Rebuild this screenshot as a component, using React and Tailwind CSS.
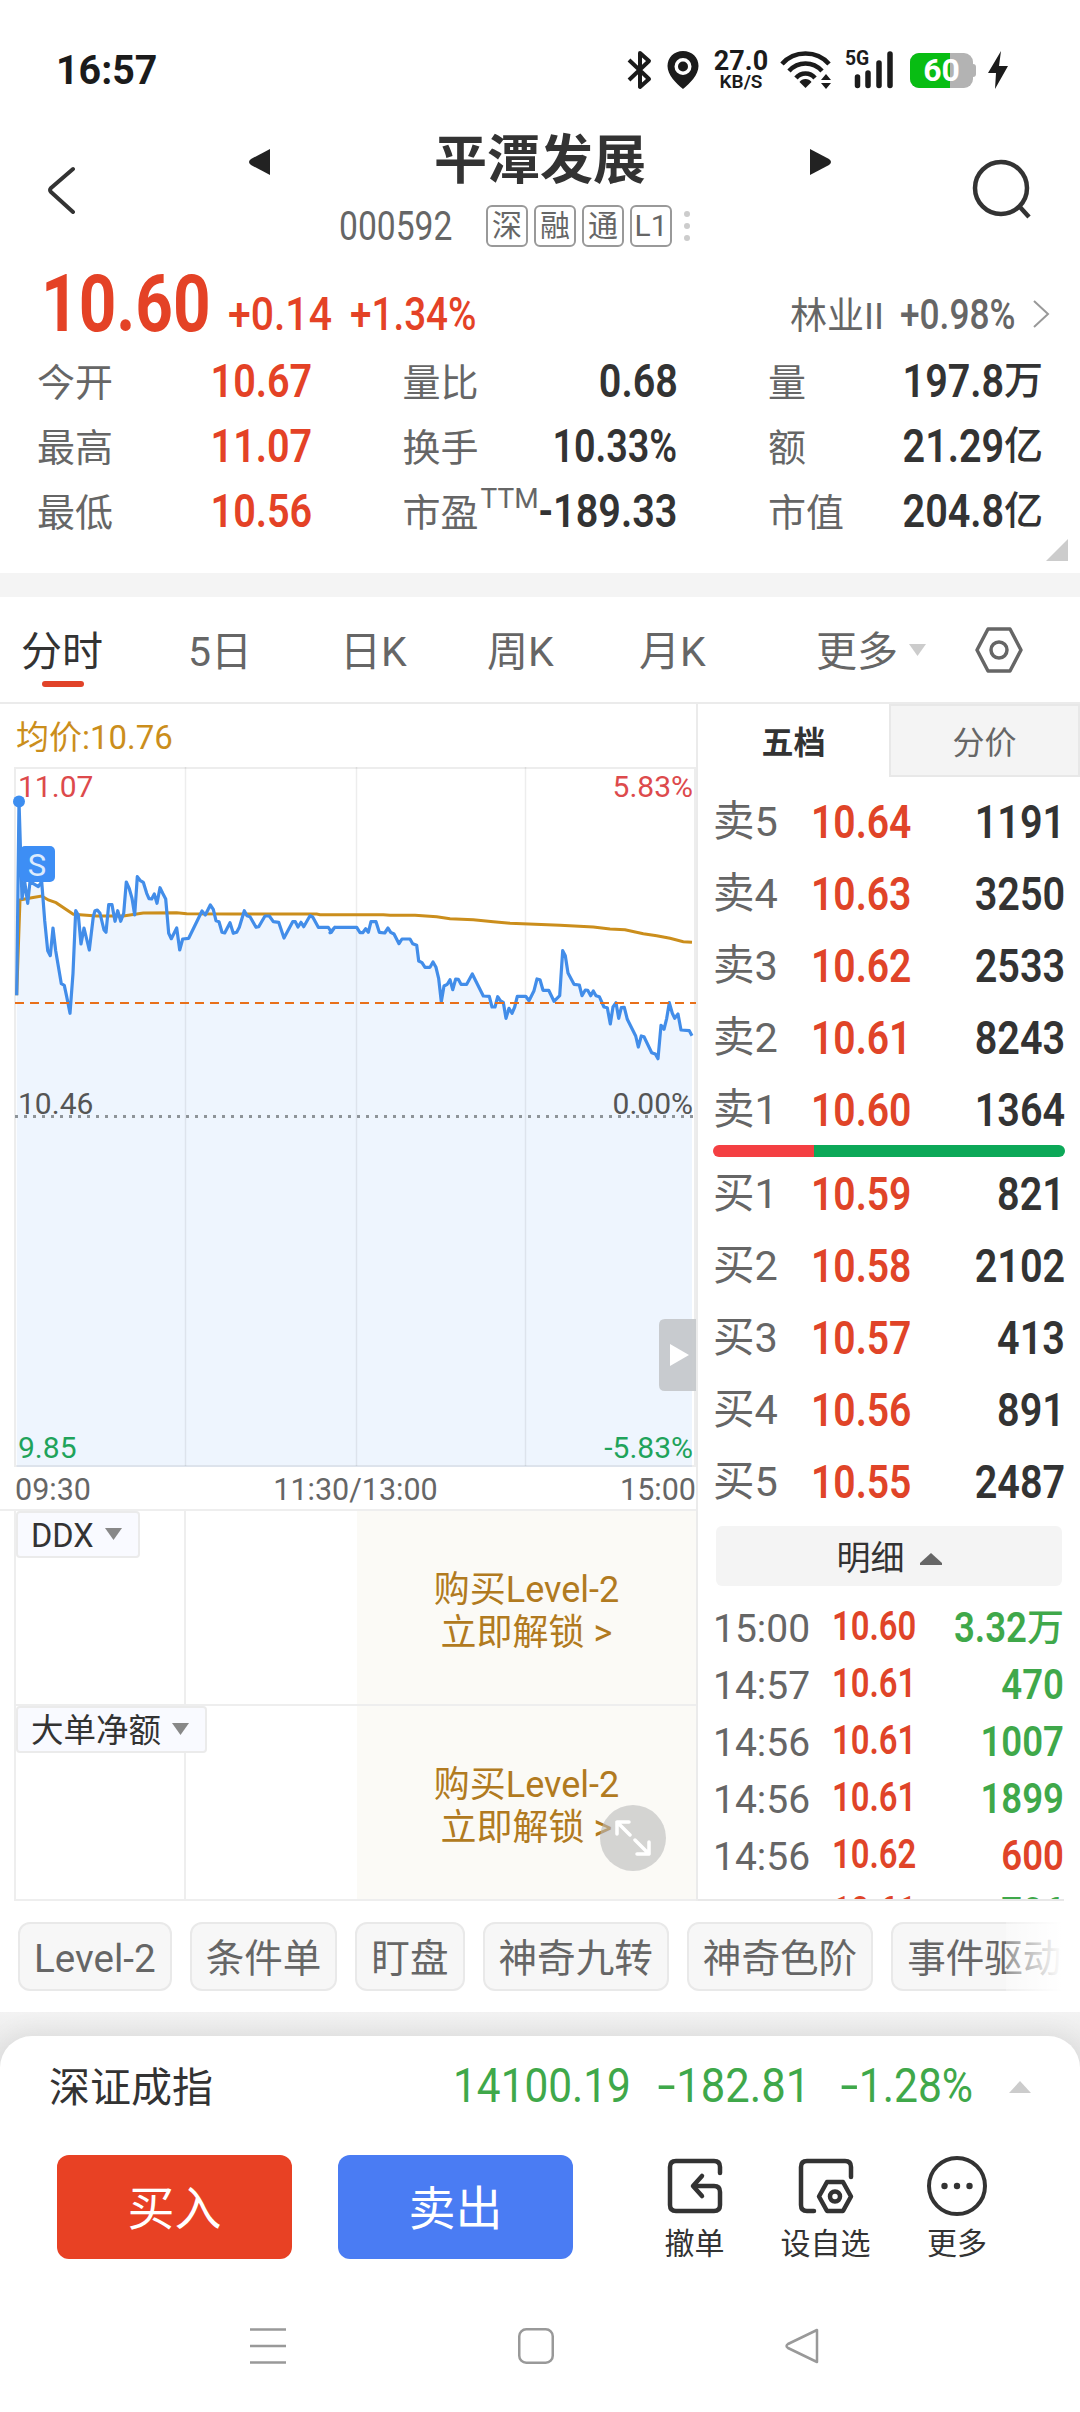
const STATS = [
  ['今开', '10.67', '量比', '0.68', '量', '197.8万'],
  ['最高', '11.07', '换手', '10.33%', '额', '21.29亿'],
  ['最低', '10.56', '市盈', '-189.33', '市值', '204.8亿'],
];

const ASKS = [
  ['卖5', '10.64', '1191'],
  ['卖4', '10.63', '3250'],
  ['卖3', '10.62', '2533'],
  ['卖2', '10.61', '8243'],
  ['卖1', '10.60', '1364'],
];

const BIDS = [
  ['买1', '10.59', '821'],
  ['买2', '10.58', '2102'],
  ['买3', '10.57', '413'],
  ['买4', '10.56', '891'],
  ['买5', '10.55', '2487'],
];

const TRADES = [
  { time: '15:00', price: '10.60', vol: '3.32万', up: false },
  { time: '14:57', price: '10.61', vol: '470', up: false },
  { time: '14:56', price: '10.61', vol: '1007', up: false },
  { time: '14:56', price: '10.61', vol: '1899', up: false },
  { time: '14:56', price: '10.62', vol: '600', up: true },
  { time: '', price: '10.61', vol: '706', up: false },
];

const CHIPS = ['Level-2', '条件单', '盯盘', '神奇九转', '神奇色阶', '事件驱动'];

// Chart units are a third of a pixel
const PRICE_AM = [
  [50, 886], [57, 304], [66, 596], [74, 545], [83, 610], [90, 545], [115, 560], [125, 545], [134, 662], [143, 752],
  [151, 767], [159, 684], [167, 752], [184, 851], [193, 856], [200, 890], [210, 940], [219, 820], [227, 632], [235, 645],
  [243, 732], [252, 684], [268, 750], [280, 650], [285, 632], [292, 630], [300, 640], [312, 690], [318, 697], [326, 614],
  [336, 614], [345, 664], [353, 632], [362, 664], [371, 640], [379, 546], [388, 566], [396, 595], [404, 645], [412, 530],
  [420, 541], [430, 547], [440, 580], [447, 596], [455, 597], [463, 582], [471, 610], [480, 563], [488, 580], [497, 597],
  [506, 700], [514, 716], [530, 684], [539, 750], [548, 717], [566, 715], [606, 633], [616, 645], [631, 615], [640, 628],
  [648, 662], [657, 665], [666, 697], [674, 699], [690, 668], [700, 700], [710, 697], [718, 682], [733, 632], [741, 647],
  [750, 650], [768, 682], [776, 680], [795, 648], [808, 648], [820, 665], [836, 667], [852, 714], [878, 665], [886, 665],
  [894, 681], [903, 667], [911, 680], [930, 647], [938, 651], [955, 682], [985, 682], [994, 697], [1004, 682],
];
const PRICE_PM = [
  [0, 578], [14, 562], [80, 562], [90, 578], [98, 578], [107, 566], [115, 577], [123, 545], [138, 545], [148, 577],
  [164, 579], [174, 564], [182, 577], [192, 582], [207, 611], [216, 597], [240, 597], [248, 611], [260, 616], [266, 663],
  [276, 668], [285, 682], [300, 682], [309, 666], [318, 682], [326, 716], [334, 785], [342, 738], [352, 733], [360, 719],
  [368, 749], [377, 717], [385, 718], [393, 733], [410, 733], [427, 702], [460, 768], [478, 769], [486, 801], [495, 801],
  [503, 770], [511, 782], [520, 787], [528, 835], [537, 805], [546, 820], [554, 801], [562, 769], [587, 769], [597, 782],
  [612, 752], [621, 717], [630, 719], [639, 751], [656, 751], [672, 784], [689, 767], [698, 632], [706, 647], [714, 699],
  [732, 733], [748, 735], [756, 767], [766, 750], [773, 751], [782, 767], [790, 753], [798, 767], [808, 770], [822, 801],
  [832, 803], [841, 852], [849, 801], [858, 788], [866, 835], [874, 803], [883, 802], [892, 838], [917, 888], [925, 921],
  [934, 888], [942, 890], [965, 938], [976, 942], [984, 956], [993, 856], [1002, 868], [1010, 835], [1018, 788], [1027, 820],
  [1034, 835], [1044, 822], [1053, 870], [1078, 872], [1086, 887],
];
const AVG_AM = [
  [50, 886], [60, 600], [75, 597], [95, 593], [125, 588], [145, 600], [168, 608], [220, 643], [290, 648], [370, 648],
  [430, 639], [530, 638], [560, 641], [700, 642], [950, 642], [960, 644],
];
const AVG_PM = [
  [0, 524], [160, 524], [180, 526], [255, 526], [320, 530], [360, 536], [430, 539], [490, 545], [540, 550], [690, 556],
  [790, 561], [840, 567], [885, 569], [940, 581], [980, 587], [1020, 595], [1060, 605], [1086, 607],
];

const toPoints = (am, pm) =>
  [...am.map(([x, y]) => [x, y - 201]), ...pm.map(([x, y]) => [x + 990, y - 81])]
    .map(([x, y]) => `${(x / 3).toFixed(1)},${(y / 3).toFixed(1)}`)
    .join(' ');

const pricePoints = toPoints(PRICE_AM, PRICE_PM);
const avgPoints = toPoints(AVG_AM, AVG_PM);

function StatusBar() {
  return (
    <div className="h-[120px] pl-[56px] pr-[71px] pt-[20px] flex items-center justify-between text-[#1b1b1b]">
      <span className="text-[41px] font-bold leading-none origin-left scale-x-[.96]">16:57</span>
      <div className="flex items-center">
        <svg width="26" height="40" viewBox="0 0 26 40" fill="none" stroke="currentColor" strokeWidth="4" strokeLinejoin="round">
          <path d="M2 10L22 29L13 37V3L22 11L2 30" />
        </svg>
        <svg className="ml-[14px]" width="32" height="38" viewBox="0 0 32 38">
          <path fill="currentColor" fillRule="evenodd" d="M16 0C7 0 .5 6.500 .5 15C.5 24 9 32 16 38C23 32 31.500 24 31.500 15C31.500 6.500 25 0 16 0ZM16 7A8.500 8.500 0 1 1 16 24A8.500 8.500 0 1 1 16 7Z" />
          <circle cx="16" cy="15.500" r="5" fill="currentColor" />
        </svg>
        <div className="ml-[14px] w-[56px] flex flex-col items-center">
          <span className="text-[27px] leading-[22px] font-bold">27.0</span>
          <span className="text-[19px] leading-[19px] font-semibold">KB/S</span>
        </div>
        <svg className="ml-[11px]" width="54" height="38" viewBox="0 0 54 38" fill="none" stroke="currentColor" strokeWidth="4.500">
          <path d="M2 13C14 -1 37 -1 49 13" />
          <path d="M9 20C18 10 33 10 42 20" />
          <path d="M16 27C21 21 30 21 35 27" />
          <path d="M25.500 37L19.500 31C22 27 29 27 31.500 31Z" fill="currentColor" stroke="none" />
          <path d="M41 29L46 23L51 29ZM41 32L46 38L51 32Z" fill="currentColor" stroke="none" />
        </svg>
        <div className="relative ml-[11px] w-[50px] h-[38px]">
          <span className="absolute left-0 -top-px text-[21px] leading-[17px] font-bold origin-left scale-x-[.92]">5G</span>
          <svg width="50" height="38" viewBox="0 0 50 38" stroke="currentColor" strokeWidth="5.500" strokeLinecap="round">
            <path d="M12.500 26V34.500M23 22V34.500M34 12V34.500M45 3V34.500" />
          </svg>
        </div>
        <div className="relative ml-[15px] w-[63px] h-[35px] rounded-[9px] overflow-hidden bg-[#b3b3b3] flex items-center justify-center">
          <div className="absolute left-0 inset-y-0 w-[40px] bg-[#08bd13]" />
          <span className="relative text-[32px] leading-none font-bold text-white">60</span>
        </div>
        <div className="w-[3px] h-[13px] rounded-r bg-[#b3b3b3]" />
        <svg className="ml-[11px]" width="22" height="38" viewBox="0 0 22 38" fill="currentColor">
          <path d="M14 0L1 22H9L8 38L21 15H12Z" />
        </svg>
      </div>
    </div>
  );
}

function Header() {
  return (
    <div className="h-[140px] flex">
      <svg className="mt-[46px] ml-[47px]" width="30" height="48" viewBox="0 0 30 48" fill="none" stroke="#333" strokeWidth="4" strokeLinecap="round" strokeLinejoin="round">
        <path d="M26 3L4 22Q2 24 4 26L26 46" />
      </svg>
      <div className="w-[584px] ml-[171px] flex flex-col">
        <div className="h-[78px] flex items-center justify-between">
          <svg width="23" height="28" viewBox="0 0 23 28" className="mt-[6px]"><path fill="#222" d="M22 1V27L3 17Q-1 14 3 11Z" /></svg>
          <h1 className="pt-[4px] text-[53px] leading-none font-bold text-[#333]">平潭发展</h1>
          <svg width="23" height="28" viewBox="0 0 23 28" className="mt-[6px]"><path fill="#222" d="M1 1V27L20 17Q24 14 20 11Z" /></svg>
        </div>
        <div className="h-[56px] pl-[91px] flex items-center text-[#666]">
          <span className="w-[147px] pt-px text-[40px] leading-none"><span className="inline-block origin-left scale-x-[.84]">000592</span></span>
          <div className="flex gap-[6px]">
            {['深', '融', '通', 'L1'].map((tag) => (
              <span key={tag} className="w-[42px] h-[42px] rounded-[6px] border-2 border-[#999] flex items-center justify-center text-[30px] leading-none">{tag}</span>
            ))}
          </div>
          <div className="ml-[12px] flex flex-col gap-[6px]">
            {[0, 1, 2].map((i) => <span key={i} className="w-[6px] h-[6px] rounded-full bg-[#ccc]" />)}
          </div>
        </div>
      </div>
      <svg className="mt-[39px] ml-auto mr-[46px]" width="62" height="62" viewBox="0 0 62 62" fill="none" stroke="#333" strokeWidth="4.500">
        <circle cx="29" cy="29" r="26" />
        <path d="M47 47L57 58" />
      </svg>
    </div>
  );
}

function Quote() {
  return (
    <div className="relative h-[313px]">
      <div className="h-[88px] pl-[41px] pr-[29px] flex items-center text-[#e44226]">
        <span className="w-[187px] text-[80px] leading-none font-bold"><span className="inline-block origin-left scale-x-[.82]">10.60</span></span>
        <div className="mt-[20px] flex flex-1 items-center text-[46px] leading-none font-medium">
          <span className="w-[122px]"><span className="inline-block origin-left scale-x-[.89]">+0.14</span></span>
          <span><span className="inline-block origin-left scale-x-[.84]">+1.34%</span></span>
        </div>
        <div className="mt-[20px] flex items-center text-[#666] leading-none">
          <span className="mt-[4px] text-[37px] w-[110px]">林业II</span>
          <span className="text-[43px] w-[131px] font-medium"><span className="inline-block origin-left scale-x-[.82]">+0.98%</span></span>
          <svg width="20" height="30" viewBox="0 0 20 30" fill="none" stroke="#999" strokeWidth="2"><path d="M3 2L17 15L3 28" /></svg>
        </div>
      </div>
      <div className="pl-[37px] pr-[37px]">
        {STATS.map((row, r) => (
          <div key={row[0]} className="h-[65px] flex items-center justify-between text-[38px] leading-none text-[#666]">
            {[0, 2, 4].map((c) => (
              <div key={c} className="w-[275px] flex items-center justify-between">
                <span className="pt-[4px] whitespace-nowrap">
                  {row[c]}
                  {r === 2 && c === 2 && <span className="relative -top-[18px] left-[2px] text-[28px] leading-none">TTM</span>}
                </span>
                <span className={`${c === 0 ? 'text-[#e44226]' : 'text-[#333]'} w-[100px] flex justify-end text-[46px] font-semibold`}>
                  <span className={`origin-right whitespace-nowrap ${row[c + 1].endsWith('%') ? 'scale-x-[.82]' : 'scale-x-[.86]'}`}>
                    {row[c + 1].replace(/[万亿]/, '')}
                  </span>
                  {c === 4 && <span className="text-[39px] leading-[46px] font-medium">{row[5].slice(-1)}</span>}
                </span>
              </div>
            ))}
          </div>
        ))}
      </div>
      <svg className="absolute right-[12px] bottom-[12px]" width="22" height="22" viewBox="0 0 22 22"><path d="M22 0V22H0Z" fill="#ccc" /></svg>
    </div>
  );
}

function PeriodTabs() {
  return (
    <div className="h-[107px] pt-[5px] border-b-2 border-[#ebebeb] flex items-center text-[41px] leading-none text-[#666]">
      <div className="relative ml-[21px] w-[167px] text-[#333]">
        分时
        <div className="absolute left-[21px] top-[49px] w-[42px] h-[6px] rounded-full bg-[#e14329]" />
      </div>
      <span className="w-[152px]">5日</span>
      <span className="w-[147px]">日K</span>
      <span className="w-[152px]">周K</span>
      <span className="w-[177px]">月K</span>
      <span>更多</span>
      <svg className="ml-[11px] mb-[5px]" width="17" height="12" viewBox="0 0 17 12"><path d="M0 0H17L8.500 12Z" fill="#ccc" /></svg>
      <svg className="ml-[48px] mb-[5px]" width="50" height="48" viewBox="0 0 50 48" fill="none" stroke="#666" strokeWidth="3.500" strokeLinejoin="round">
        <path d="M14 3H36L47 24L36 45H14L3 24Z" />
        <circle cx="25" cy="24" r="8" />
      </svg>
    </div>
  );
}

function MinuteChart() {
  return (
    <svg width="696" height="700" viewBox="0 0 696 700" className="block">
      <polygon points={`16.700,700 ${pricePoints} 692,700`} fill="#eef5fe" />
      <g stroke="#000" strokeOpacity=".07" strokeWidth="1.500">
        <path d="M185.500 0V699M356.500 0V699M525.500 0V699" />
        <path d="M15 1H695V699H15Z" fill="none" strokeWidth="2" />
      </g>
      <g fontSize="30">
        <text x="18" y="30" fill="#dd4a4c">11.07</text>
        <text x="693" y="30" textAnchor="end" fill="#dd4a4c">5.83%</text>
        <text x="18" y="347" fill="#555">10.46</text>
        <text x="693" y="347" textAnchor="end" fill="#555">0.00%</text>
        <text x="18" y="691" fill="#1fa35b">9.85</text>
        <text x="693" y="691" textAnchor="end" fill="#1fa35b">-5.83%</text>
      </g>
      <path d="M15 349.500H694" stroke="#8e9499" strokeWidth="3" strokeDasharray="3 6" />
      <polyline points={avgPoints} fill="none" stroke="#cb8e1c" strokeWidth="3" />
      <polyline points={pricePoints} fill="none" stroke="#428de9" strokeWidth="3.200" strokeLinejoin="round" />
      <path d="M15 236H696" stroke="#e8701a" strokeWidth="2" strokeDasharray="9 6" />
      <circle cx="19" cy="34.500" r="6" fill="#3d8ef0" />
      <rect x="20" y="79" width="35" height="36" rx="5" fill="#3d8ef5" />
      <text x="37" y="109" textAnchor="middle" fontSize="31" fill="#dcebfd">S</text>
      <path d="M696 552H665Q659 552 659 558V618Q659 624 665 624H696Z" fill="#c3c6ca" fillOpacity=".9" />
      <path d="M670 577L689 588L670 599Z" fill="#fff" />
    </svg>
  );
}

function LockedPanel({ name, width }) {
  return (
    <div className="h-[195px] ml-[14px] border-l-2 border-b-2 border-[#eee] flex">
      <div className="w-[170px] border-r-2 border-[#eee]">
        <div className={`${width} relative h-[47px] border-2 border-[#ebebeb] rounded-[4px] bg-[#f9faff] pl-[13px] pt-[3px] flex items-center text-[32.5px] leading-none text-[#333] whitespace-nowrap`}>
          {name}
          <svg className="ml-[11px] mb-[4px]" width="17" height="12" viewBox="0 0 17 12"><path d="M0 0H17L8.500 12Z" fill="#888" /></svg>
        </div>
      </div>
      <div className="w-[171px]" />
      <div className="flex-1 bg-[#fbfaf6] flex flex-col items-center justify-center pt-[8px] text-[36px] leading-[43px] text-[#b17a20]">
        <span>购买Level-2</span>
        <span>立即解锁 &gt;</span>
      </div>
    </div>
  );
}

function BookRow({ row }) {
  return (
    <div className="h-[72px] pl-[15px] pr-[15px] pt-px flex items-center text-[46px] leading-none font-semibold">
      <span className="w-[98px] pt-px text-[41.5px] font-normal text-[#666]">{row[0]}</span>
      <span className="text-[#e04428] origin-left scale-x-[.85]">{row[1]}</span>
      <span className="flex-1 text-right text-[#333]"><span className="inline-block origin-right scale-x-[.86]">{row[2]}</span></span>
    </div>
  );
}

function OrderBook() {
  return (
    <div className="flex-1 h-[1197px] border-l-2 border-[#ebebeb] flex flex-col">
      <div className="h-[73px] flex text-[32px] leading-none">
        <div className="w-[191px] pt-[4px] flex items-center justify-center font-bold text-[#333]">五档</div>
        <div className="flex-1 pt-[4px] border-2 border-[#e8e8e8] bg-[#f4f4f4] flex items-center justify-center text-[#666]">分价</div>
      </div>
      <div className="pt-[8px]">
        {ASKS.map((row) => <BookRow key={row[0]} row={row} />)}
      </div>
      <div className="ml-[15px] w-[352px] h-[12px] shrink-0 rounded-full overflow-hidden flex">
        <div className="w-[101px] bg-[#f43f42]" />
        <div className="flex-1 bg-[#0ca858]" />
      </div>
      {BIDS.map((row) => <BookRow key={row[0]} row={row} />)}
      <div className="mt-[9px] ml-[18px] w-[346px] h-[60px] shrink-0 rounded-[6px] bg-[#f4f4f4] pt-[4px] flex items-center justify-center gap-[15px] text-[34px] leading-none text-[#333]">
        明细
        <svg className="mt-[2px]" width="22" height="12" viewBox="0 0 22 12"><path d="M11 0L22 10V12H0V10Z" fill="#666" /></svg>
      </div>
      <div className="mt-[14px] flex-1 w-[366px] overflow-hidden border-b-2 border-[#e8e8e8]">
        {TRADES.map((t, i) => (
          <div key={i} className="h-[57px] pl-[15px] flex items-center leading-none font-semibold">
            <span className="w-[119px] pt-[2px] text-[39px] font-normal text-[#666]">{t.time}</span>
            <span className="mb-[3px] text-[40px] text-[#e04428] origin-left scale-x-[.82]">{t.price}</span>
            <span className={`flex-1 mb-[1px] flex items-center justify-end text-[42px] ${t.up ? 'text-[#e04428]' : 'text-[#3fa84a]'}`}>
              <span className="origin-right scale-x-[.87]">{t.vol.replace('万', '')}</span>
              {t.vol.endsWith('万') && <span className="text-[37px] font-medium">万</span>}
            </span>
          </div>
        ))}
      </div>
    </div>
  );
}

function ChipRow() {
  return (
    <div className="relative h-[111px] w-[1062px] pl-[18px] pt-[21px] overflow-hidden flex gap-[18px]">
      {CHIPS.map((chip) => (
        <span key={chip} className="shrink-0 h-[69px] px-[14px] pt-[5px] rounded-[12px] border-2 border-[#e9e9e9] bg-[#f7f7f7] flex items-center text-[38.6px] leading-none text-[#666]">
          {chip}
        </span>
      ))}
      <div className="absolute right-0 inset-y-0 w-[56px] bg-linear-to-r from-white/30 to-white" />
    </div>
  );
}

function Minus() {
  return <span className="inline-block w-[.44em] text-center"><span className="inline-block scale-x-[1.5]">-</span></span>;
}

function IndexBar() {
  return (
    <div className="h-[102px] pl-[49px] pr-[49px] flex items-center leading-none text-[49px] text-[#3fa84a]">
      <span className="flex-1 pt-[2px] text-[41px] text-[#333]">深证成指</span>
      <span className="w-[204px] pb-[3px]"><span className="inline-block origin-left scale-x-[.865]">14100.19</span></span>
      <span className="w-[183px] pb-[3px] whitespace-nowrap"><span className="inline-block origin-left scale-x-[.89]"><Minus />182.81</span></span>
      <span className="w-[169px] pb-[3px] whitespace-nowrap"><span className="inline-block origin-left scale-x-[.87]"><Minus />1.28%</span></span>
      <svg width="22" height="12" viewBox="0 0 22 12"><path d="M11 0L22 12H0Z" fill="#ccc" /></svg>
    </div>
  );
}

function ActionBar() {
  return (
    <div className="h-[180px] pl-[57px] pt-[17px] flex text-[30px] leading-none text-[#333]">
      <button className="w-[235px] h-[104px] pt-[3px] rounded-[12px] bg-[#e84124] text-[47px] text-white">买入</button>
      <button className="ml-[46px] w-[235px] h-[104px] pt-[3px] rounded-[12px] bg-[#4a7cf3] text-[47px] text-white">卖出</button>
      <div className="ml-[56px] w-[131px] flex flex-col items-center">
        <svg width="60" height="62" viewBox="0 0 60 62" fill="none" stroke="#333" strokeWidth="4.500" strokeLinecap="round" strokeLinejoin="round">
          <path d="M55 18V12Q55 6 49 6H11Q5 6 5 12V50Q5 56 11 56H49Q55 56 55 50V37Q55 31 49 31H29" />
          <path d="M37 21L28 31L37 41" />
        </svg>
        <span className="mt-[12px]">撤单</span>
      </div>
      <div className="w-[131px] flex flex-col items-center">
        <svg width="60" height="62" viewBox="0 0 60 62" fill="none" stroke="#333" strokeWidth="4.500" strokeLinecap="round" strokeLinejoin="round">
          <path d="M55 22V12Q55 6 49 6H11Q5 6 5 12V50Q5 56 11 56H18" />
          <path d="M31 27H47L55 41.500L47 56H31L23 41.500Z" />
          <circle cx="39" cy="41.500" r="5" />
        </svg>
        <span className="mt-[12px]">设自选</span>
      </div>
      <div className="w-[132px] flex flex-col items-center">
        <svg width="62" height="62" viewBox="0 0 62 62" fill="none" stroke="#333" strokeWidth="4">
          <circle cx="31" cy="31" r="28" />
          <g fill="#333" stroke="none">
            <circle cx="18.500" cy="31" r="3.200" />
            <circle cx="31" cy="31" r="3.200" />
            <circle cx="43.500" cy="31" r="3.200" />
          </g>
        </svg>
        <span className="mt-[12px]">更多</span>
      </div>
    </div>
  );
}

export default function App() {
  return (
    <div className="w-[1080px] h-[2412px] overflow-hidden bg-white font-[Roboto,'Noto_Sans_CJK_SC',sans-serif] flex flex-col">
      <StatusBar />
      <Header />
      <Quote />
      <div className="h-[24px] shrink-0 bg-[#f4f4f4]" />
      <PeriodTabs />

      <div className="flex shrink-0">
        <div className="relative w-[696px]">
          <div className="h-[63px] pl-[16px] pt-[3px] flex items-center text-[33px] leading-none text-[#cb8e1c]">均价:10.76</div>
          <MinuteChart />
          <div className="h-[44px] pl-[15px] pt-[5px] flex items-center justify-between text-[30.5px] leading-none text-[#666] border-b-2 border-[#eee]">
            <span>09:30</span>
            <span>11:30/13:00</span>
            <span>15:00</span>
          </div>
          <LockedPanel name="DDX" width="w-[124px]" />
          <LockedPanel name="大单净额" width="w-[191px]" />
          <div className="absolute left-[600px] top-[1101px] w-[66px] h-[66px] rounded-full bg-[#bbb]/60 flex items-center justify-center">
            <svg width="36" height="36" viewBox="0 0 36 36" fill="none" stroke="#fff" strokeWidth="3.500" strokeLinecap="round" strokeLinejoin="round">
              <path d="M2 14V2H14M2 2L15 15M34 22V34H22M34 34L20 20" />
            </svg>
          </div>
        </div>
        <OrderBook />
      </div>

      <ChipRow />
      <div className="flex-1 bg-linear-to-b from-[#f3f3f3] to-[#e8e8e8] to-10%">
        <div className="mt-[24px] h-full rounded-t-[32px] bg-white shadow-[0_-6px_24px_rgba(0,0,0,0.06)]">
          <IndexBar />
          <ActionBar />
          <div className="pt-[10px] pl-[250px] flex gap-[232px]">
            <svg width="36" height="36" viewBox="0 0 36 36" stroke="#999" strokeWidth="2.500"><path d="M0 1.500H36M0 18H36M0 34.500H36" /></svg>
            <svg width="36" height="36" viewBox="0 0 36 36" fill="none" stroke="#999" strokeWidth="2.500"><rect x="1.250" y="1.250" width="33.500" height="33.500" rx="7" /></svg>
            <svg className="-ml-[2px]" width="36" height="36" viewBox="0 0 36 36" fill="none" stroke="#999" strokeWidth="2.500" strokeLinejoin="round"><path d="M33 2V34L4 20Q1 18 4 16Z" /></svg>
          </div>
        </div>
      </div>
    </div>
  );
}
